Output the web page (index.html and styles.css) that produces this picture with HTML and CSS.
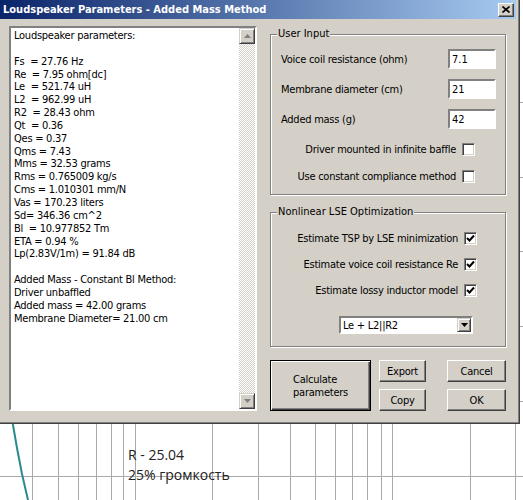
FILE: index.html
```html
<!DOCTYPE html>
<html lang="en">
<head>
    <meta charset="UTF-8">
    <title>Loudspeaker Parameters - Added Mass Method</title>
    <link rel="stylesheet" href="styles.css">
</head>
<body>

<div class="desktop">
    <!-- response plot behind the dialog -->
    <svg class="graph" width="523" height="500" viewBox="0 0 523 500">
        <g class="grid">
            <line x1="32.5" y1="0" x2="32.5" y2="500"/>
            <line x1="58.5" y1="0" x2="58.5" y2="500"/>
            <line x1="78.5" y1="0" x2="78.5" y2="500"/>
            <line x1="96.5" y1="0" x2="96.5" y2="500"/>
            <line x1="111.5" y1="0" x2="111.5" y2="500"/>
            <line x1="123.5" y1="0" x2="123.5" y2="500"/>
            <line x1="135.5" y1="0" x2="135.5" y2="500"/>
            <line x1="212.5" y1="0" x2="212.5" y2="500"/>
            <line x1="258.5" y1="0" x2="258.5" y2="500"/>
            <line x1="290.5" y1="0" x2="290.5" y2="500"/>
            <line x1="315.5" y1="0" x2="315.5" y2="500"/>
            <line x1="335.5" y1="0" x2="335.5" y2="500"/>
            <line x1="352.5" y1="0" x2="352.5" y2="500"/>
            <line x1="367.5" y1="0" x2="367.5" y2="500"/>
            <line x1="381.5" y1="0" x2="381.5" y2="500"/>
            <line x1="392.5" y1="0" x2="392.5" y2="500"/>
            <line x1="470.5" y1="0" x2="470.5" y2="500"/>
            <line x1="515.5" y1="0" x2="515.5" y2="500"/>
            <line x1="0" y1="102.5" x2="523" y2="102.5"/>
            <line x1="0" y1="177.5" x2="523" y2="177.5"/>
            <line x1="0" y1="251.5" x2="523" y2="251.5"/>
            <line x1="0" y1="326.5" x2="523" y2="326.5"/>
            <line x1="0" y1="401.5" x2="523" y2="401.5"/>
            <line x1="0" y1="476.5" x2="523" y2="476.5"/>
        </g>
        <polyline class="curve" points="11,410 13,425 17,448 22,474 28,500"/>
    </svg>
    <div class="graph-label label-r">R - 25.04</div>
    <div class="graph-label label-vol">25% громкость</div>

    <div class="dialog">
        <div class="titlebar">
            <span class="title">Loudspeaker Parameters - Added Mass Method</span>
            <button class="close-button">
                <svg width="8" height="7" viewBox="0 0 8 7"><path d="M0.5 0.5 L7.5 6.5 M7.5 0.5 L0.5 6.5" stroke="#000" stroke-width="1.6"/></svg>
            </button>
        </div>

        <div class="dialog-body">
            <div class="listbox">
                <div class="results">Loudspeaker parameters:

Fs  = 27.76 Hz
Re  = 7.95 ohm[dc]
Le  = 521.74 uH
L2  = 962.99 uH
R2  = 28.43 ohm
Qt  = 0.36
Qes = 0.37
Qms = 7.43
Mms = 32.53 grams
Rms = 0.765009 kg/s
Cms = 1.010301 mm/N
Vas = 170.23 liters
Sd= 346.36 cm^2
Bl  = 10.977852 Tm
ETA = 0.94 %
Lp(2.83V/1m) = 91.84 dB

Added Mass - Constant Bl Method:
Driver unbaffled
Added mass = 42.00 grams
Membrane Diameter= 21.00 cm</div>
                <div class="scrollbar">
                    <span class="scroll-btn">
                        <svg width="7" height="4" viewBox="0 0 7 4"><path d="M3.5 0 L7 4 L0 4 Z" fill="#808080"/></svg>
                    </span>
                    <span class="scroll-track"></span>
                    <span class="scroll-btn">
                        <svg width="7" height="4" viewBox="0 0 7 4"><path d="M0 0 L7 0 L3.5 4 Z" fill="#808080"/></svg>
                    </span>
                </div>
            </div>

            <div class="controls">
                <div class="group user-input">
                    <span class="group-title">User Input</span>
                    <div class="field-row">
                        <label>Voice coil resistance (ohm)</label>
                        <input class="edit" value="7.1" readonly>
                    </div>
                    <div class="field-row">
                        <label>Membrane diameter (cm)</label>
                        <input class="edit" value="21" readonly>
                    </div>
                    <div class="field-row">
                        <label>Added mass (g)</label>
                        <input class="edit" value="42" readonly>
                    </div>
                    <div class="check-row first">
                        <span>Driver mounted in infinite baffle</span>
                        <span class="check"></span>
                    </div>
                    <div class="check-row">
                        <span>Use constant compliance method</span>
                        <span class="check"></span>
                    </div>
                </div>

                <div class="group lse">
                    <span class="group-title">Nonlinear LSE Optimization</span>
                    <div class="check-row">
                        <span>Estimate TSP by LSE minimization</span>
                        <span class="check"><svg width="11" height="11" viewBox="0 0 11 11"><polyline points="2,5 4.5,7.5 9,2.5" fill="none" stroke="#000" stroke-width="2"/></svg></span>
                    </div>
                    <div class="check-row">
                        <span>Estimate voice coil resistance Re</span>
                        <span class="check"><svg width="11" height="11" viewBox="0 0 11 11"><polyline points="2,5 4.5,7.5 9,2.5" fill="none" stroke="#000" stroke-width="2"/></svg></span>
                    </div>
                    <div class="check-row">
                        <span>Estimate lossy inductor model</span>
                        <span class="check"><svg width="11" height="11" viewBox="0 0 11 11"><polyline points="2,5 4.5,7.5 9,2.5" fill="none" stroke="#000" stroke-width="2"/></svg></span>
                    </div>
                    <div class="combo">
                        <span class="combo-text">Le + L2||R2</span>
                        <span class="combo-button">
                            <svg width="7" height="4" viewBox="0 0 7 4"><path d="M0 0 L7 0 L3.5 4 Z" fill="#000"/></svg>
                        </span>
                    </div>
                </div>

                <div class="button-area">
                    <button class="btn btn-default calc"><span>Calculate<br>parameters</span></button>
                    <div class="button-col first">
                        <button class="btn small">Export</button>
                        <button class="btn small">Copy</button>
                    </div>
                    <div class="button-col">
                        <button class="btn wide">Cancel</button>
                        <button class="btn wide">OK</button>
                    </div>
                </div>
            </div>
        </div>
    </div>
</div>

</body>
</html>
```

FILE: styles.css
```css
body {
    margin: 0;
    background-color: #fff;
}

.desktop {
    position: relative;
    width: 523px;
    height: 500px;
    overflow: hidden;
    background-color: #fff;
}

.graph {
    position: absolute;
    left: 0;
    top: 0;
}

.grid line {
    stroke: #a9a9a9;
    stroke-width: 1;
    shape-rendering: crispEdges;
}

.curve {
    fill: none;
    stroke: #2a8a8c;
    stroke-width: 2;
}

.graph-label {
    position: absolute;
    left: 128px;
    font-family: "Open Sans", sans-serif;
    font-size: 14px;
    line-height: 20px;
    color: #222;
}
.label-r { top: 445px; }
.label-vol { top: 465px; }

/* dialog window */
.dialog {
    position: absolute;
    left: 0;
    top: 0;
    width: 520px;
    height: 424px;
    box-sizing: border-box;
    background-color: #d4d0c8;
    border-right: 1px solid #404040;
    border-bottom: 1px solid #404040;
    box-shadow: inset -1px -1px #808080;
    font-family: "DejaVu Sans Condensed", "DejaVu Sans", sans-serif;
    font-size: 11px;
    color: #000;
}

.titlebar {
    display: flex;
    align-items: center;
    justify-content: space-between;
    height: 19px;
    margin-right: 3px;
    padding: 0 2px 0 3px;
    background: linear-gradient(to right, #0a246a, #a6caf0);
    color: #fff;
    font-weight: bold;
}

.close-button {
    display: flex;
    align-items: center;
    justify-content: center;
    width: 16px;
    height: 14px;
    padding: 0;
    box-sizing: border-box;
    background-color: #d4d0c8;
    border: 1px solid;
    border-color: #fff #404040 #404040 #fff;
    box-shadow: inset -1px -1px #808080;
}

.dialog-body {
    display: flex;
    align-items: flex-start;
    gap: 13px;
    padding: 7px 0 0 9px;
    letter-spacing: -0.25px;
}

/* results list */
.listbox {
    display: flex;
    width: 248px;
    height: 385px;
    box-sizing: border-box;
    background-color: #fff;
    border: 2px solid;
    border-color: #808080 #fff #fff #808080;
}

.results {
    flex: 1;
    padding: 2px 0 0 3px;
    white-space: pre;
    line-height: 12.85px;
}

.scrollbar {
    display: flex;
    flex-direction: column;
    width: 16px;
}

.scroll-btn {
    display: flex;
    align-items: center;
    justify-content: center;
    height: 16px;
    box-sizing: border-box;
    background-color: #d4d0c8;
    border: 1px solid;
    border-color: #d4d0c8 #404040 #404040 #d4d0c8;
    box-shadow: inset 1px 1px #fff, inset -1px -1px #808080;
}

.scroll-track {
    flex: 1;
    background: repeating-conic-gradient(#fff 0 25%, #d4d0c8 0 50%) 0 0 / 2px 2px;
}

/* right side */
.controls {
    width: 236px;
}

.group {
    position: relative;
    box-sizing: border-box;
    border: 1px solid #808080;
    box-shadow: inset 1px 1px #fff, 1px 1px #fff;
}

.group-title {
    position: absolute;
    left: 6px;
    top: -8px;
    padding: 0 1px;
    line-height: 14px;
    letter-spacing: 0;
    background-color: #d4d0c8;
}

.user-input {
    height: 161px;
    margin-top: 8px;
    padding: 9px 9px 0 10px;
}

.lse {
    height: 135px;
    margin-top: 17px;
    padding: 12px 9px 0 10px;
}

.field-row {
    display: flex;
    align-items: center;
    justify-content: space-between;
    height: 30px;
}

.edit {
    width: 48px;
    height: 20px;
    box-sizing: border-box;
    padding: 0 2px;
    font: inherit;
    background-color: #fff;
    border: 2px solid;
    border-color: #808080 #fff #fff #808080;
    outline: none;
}

.check-row {
    display: flex;
    align-items: center;
    justify-content: flex-end;
    gap: 6px;
    height: 27px;
    margin-right: 21px;
}
.check-row.first { margin-top: 2px; }

.lse .check-row {
    height: 26px;
    margin-right: 19px;
}

.check {
    display: block;
    width: 13px;
    height: 13px;
    box-sizing: border-box;
    background-color: #fff;
    border: 1px solid;
    border-color: #808080 #fff #fff #808080;
    box-shadow: inset 1px 1px #404040, inset -1px -1px #d4d0c8;
}
.check svg { display: block; }

.combo {
    display: flex;
    align-items: center;
    width: 134px;
    height: 18px;
    margin: 13px 23px 0 auto;
    box-sizing: border-box;
    background-color: #fff;
    border: 2px solid;
    border-color: #808080 #fff #fff #808080;
}

.combo-text {
    flex: 1;
    padding-left: 2px;
}

.combo-button {
    display: flex;
    align-items: center;
    justify-content: center;
    width: 14px;
    height: 14px;
    box-sizing: border-box;
    background-color: #d4d0c8;
    border: 1px solid;
    border-color: #d4d0c8 #404040 #404040 #d4d0c8;
    box-shadow: inset 1px 1px #fff, inset -1px -1px #808080;
}

/* buttons */
.button-area {
    display: flex;
    margin-top: 13px;
}

.button-col {
    display: flex;
    flex-direction: column;
    gap: 7px;
    margin-left: 21px;
}
.button-col.first { margin-left: 8px; }

.btn {
    height: 22px;
    padding: 0;
    box-sizing: border-box;
    font: inherit;
    letter-spacing: inherit;
    color: #000;
    background-color: #d4d0c8;
    border: 1px solid;
    border-color: #fff #404040 #404040 #fff;
    box-shadow: inset -1px -1px #808080;
}
.btn.small { width: 47px; }
.btn.wide { width: 59px; }

.btn-default {
    border: 1px solid #000;
    box-shadow: inset 1px 1px #fff, inset -1px -1px #404040, inset -2px -2px #808080;
}

.calc {
    width: 101px;
    height: 51px;
    line-height: 13px;
}
.calc span {
    display: inline-block;
    text-align: left;
}
```
